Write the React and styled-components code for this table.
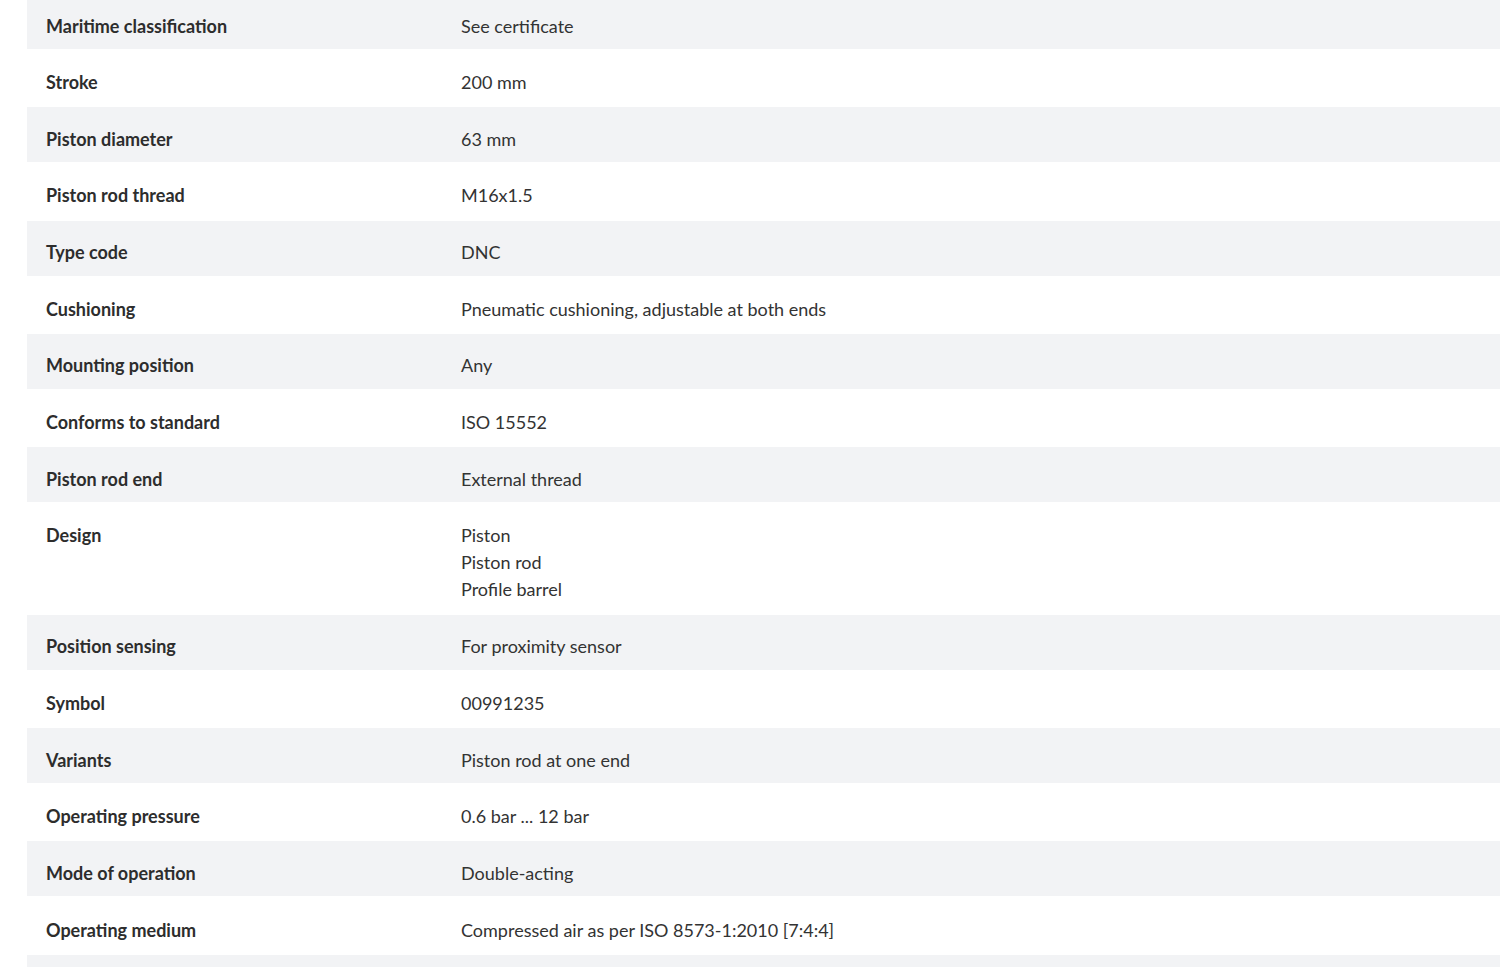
import React from 'react'
import styled, { createGlobalStyle } from 'styled-components'

const GlobalStyle = createGlobalStyle`
  html, body {
    margin: 0;
    padding: 0;
    background: #ffffff;
    overflow: hidden;
  }
  body {
    font-family: Lato, "Open Sans", sans-serif;
    color: #333333;
  }
`

const specs = [
    { label: 'Maritime classification', value: ['See certificate'] },
    { label: 'Stroke', value: ['200 mm'] },
    { label: 'Piston diameter', value: ['63 mm'] },
    { label: 'Piston rod thread', value: ['M16x1.5'] },
    { label: 'Type code', value: ['DNC'] },
    { label: 'Cushioning', value: ['Pneumatic cushioning, adjustable at both ends'] },
    { label: 'Mounting position', value: ['Any'] },
    { label: 'Conforms to standard', value: ['ISO 15552'] },
    { label: 'Piston rod end', value: ['External thread'] },
    { label: 'Design', value: ['Piston', 'Piston rod', 'Profile barrel'] },
    { label: 'Position sensing', value: ['For proximity sensor'] },
    { label: 'Symbol', value: ['00991235'] },
    { label: 'Variants', value: ['Piston rod at one end'] },
    { label: 'Operating pressure', value: ['0.6 bar ... 12 bar'] },
    { label: 'Mode of operation', value: ['Double-acting'] },
    { label: 'Operating medium', value: ['Compressed air as per ISO 8573-1:2010 [7:4:4]'] },
]

function App() {
    return (
        <>
            <GlobalStyle />
            <Page>
                <SpecTable>
                    {specs.map((row, i) => (
                        <Row
                            key={row.label}
                            striped={i % 2 === 0 ? 1 : 0}
                            tall={row.value.length > 1 ? 1 : 0}
                        >
                            <Label>{row.label}</Label>
                            <Value>
                                {row.value.map(line => (
                                    <Line key={line}>{line}</Line>
                                ))}
                            </Value>
                        </Row>
                    ))}
                    {/* next row, scrolled out below the fold */}
                    <Row striped={1} />
                </SpecTable>
            </Page>
        </>
    )
}

const Page = styled.div`
    height: 967px;
    overflow: hidden;
    padding-left: 27px;
`

const SpecTable = styled.div`
    display: flex;
    flex-direction: column;
    gap: 1.65px;
    margin-top: -6px;
`

const Row = styled.div`
    display: grid;
    grid-template-columns: 415px 1fr;
    min-height: 55px;
    flex-shrink: 0;
    box-sizing: border-box;
    padding: 18.5px 0 ${p => (p.tall ? '10px' : '9.5px')};
    background-color: ${p => (p.striped ? '#f2f3f5' : '#ffffff')};
    font-size: 18px;
    line-height: 27px;
`

const Label = styled.div`
    padding: 0 19px;
    font-weight: 700;
    color: #2d2d2d;
`

const Value = styled.div`
    padding: 0 19px;
    color: #333333;
`

const Line = styled.div``

export default App
